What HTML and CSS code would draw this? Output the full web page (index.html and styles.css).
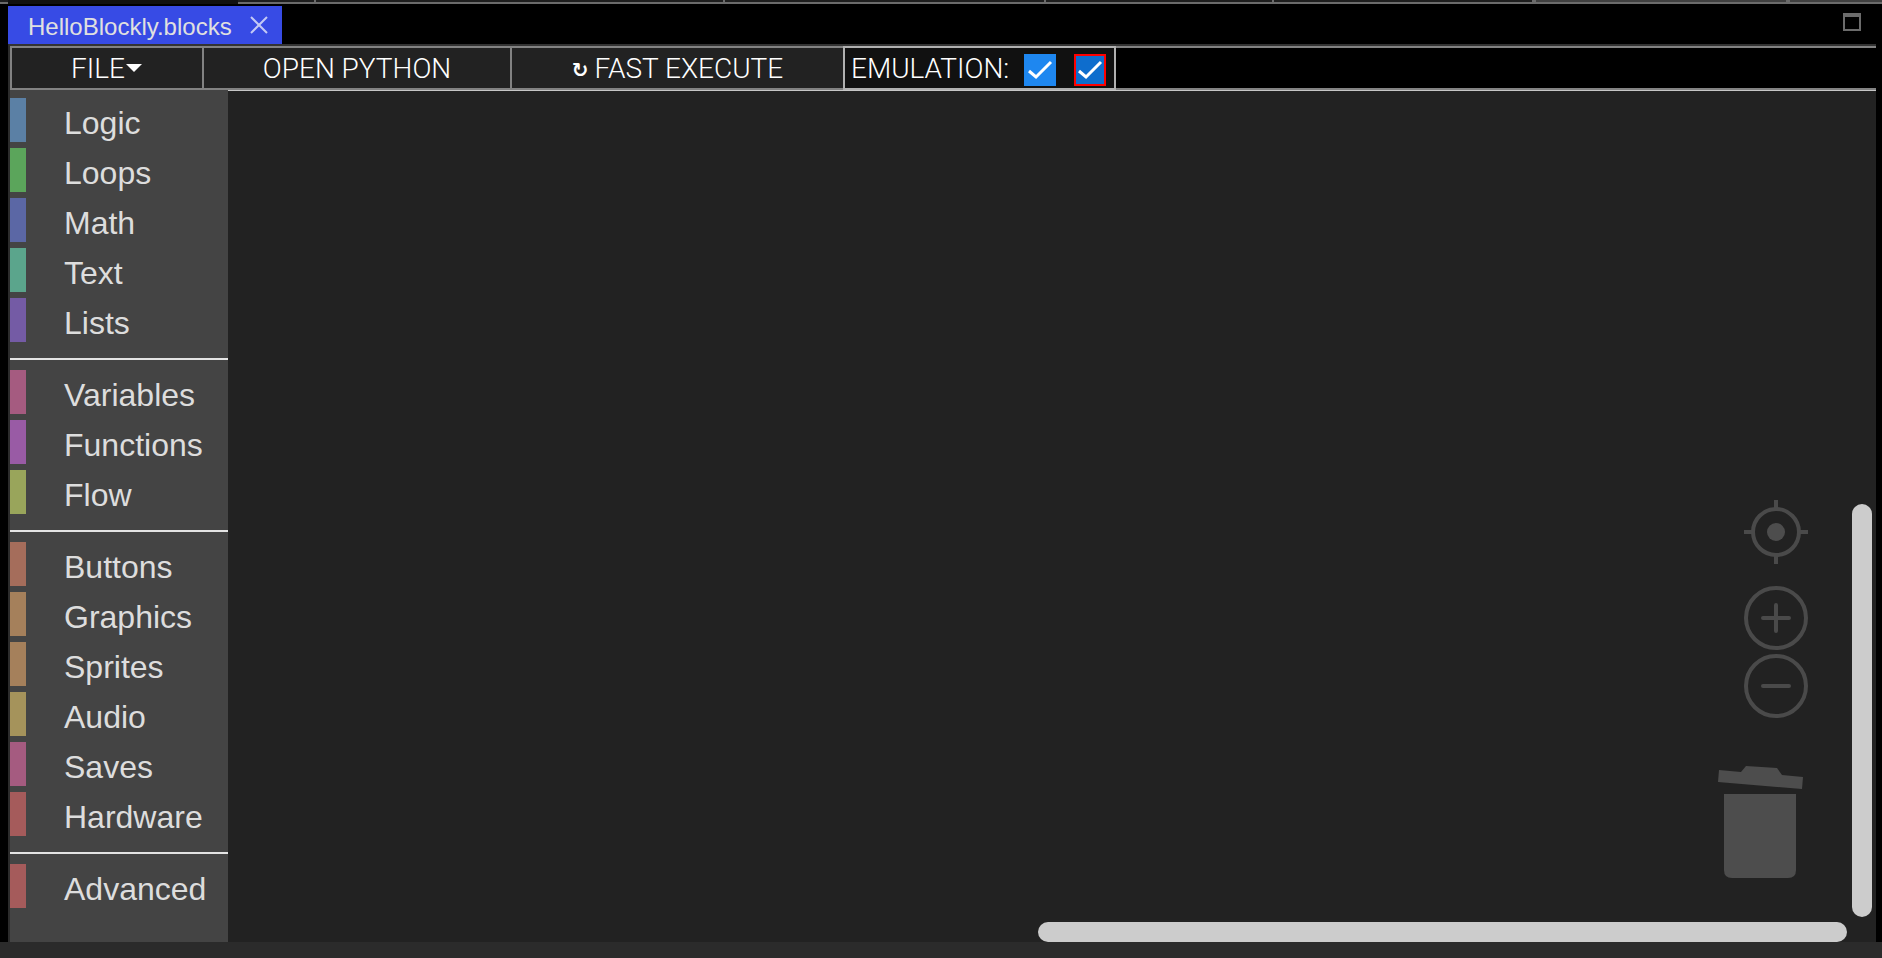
FILE: index.html
```html
<!DOCTYPE html>
<html lang="en">
<head>
    <meta charset="UTF-8">
    <meta name="viewport" content="width=device-width, initial-scale=1.0">
    <title>HelloBlockly.blocks</title>
    <link rel="stylesheet" href="styles.css">
</head>
<body>

    <div class="panel-edge">
        <span class="edge-cell edge-left"></span>
        <span class="edge-cell edge-active"></span>
        <span class="edge-cell edge-first"></span>
        <span class="edge-cell edge-second"></span>
        <span class="edge-cell edge-third"></span>
        <span class="edge-cell edge-fourth"></span>
        <span class="edge-cell edge-fifth"></span>
        <span class="edge-cell edge-light"></span>
        <span class="edge-cell edge-rest"></span>
    </div>

    <header class="tab-bar">
        <div class="tab">
            <span>HelloBlockly.blocks</span>
            <button class="tab-close" aria-label="Close">
                <svg width="18" height="18" viewBox="0 0 18 18"><path d="M1 1L17 17M17 1L1 17" stroke="#c3c9f5" stroke-width="2"/></svg>
            </button>
        </div>
        <button class="maximize" aria-label="Maximize"></button>
    </header>

    <div class="editor">
        <nav class="toolbar">
            <button class="tool tool-file">FILE<svg width="18" height="10" viewBox="0 0 18 10"><path d="M1 1H17L9 9Z" fill="#fff"/></svg></button>
            <button class="tool tool-python">OPEN PYTHON</button>
            <button class="tool tool-fast"><span class="reload">↻</span> FAST EXECUTE</button>
            <div class="emulation">
                <label for="emulation">EMULATION:</label>
                <input type="checkbox" id="emulation" class="check" checked>
                <input type="checkbox" class="check check-red" aria-label="Emulation option" checked>
            </div>
        </nav>

        <main class="content">
            <aside class="toolbox">
                <ul class="group">
                    <li class="logic"><a href="#">Logic</a></li>
                    <li class="loops"><a href="#">Loops</a></li>
                    <li class="math"><a href="#">Math</a></li>
                    <li class="text"><a href="#">Text</a></li>
                    <li class="lists"><a href="#">Lists</a></li>
                </ul>
                <ul class="group">
                    <li class="variables"><a href="#">Variables</a></li>
                    <li class="functions"><a href="#">Functions</a></li>
                    <li class="flow"><a href="#">Flow</a></li>
                </ul>
                <ul class="group">
                    <li class="buttons"><a href="#">Buttons</a></li>
                    <li class="graphics"><a href="#">Graphics</a></li>
                    <li class="graphics"><a href="#">Sprites</a></li>
                    <li class="audio"><a href="#">Audio</a></li>
                    <li class="saves"><a href="#">Saves</a></li>
                    <li class="hardware"><a href="#">Hardware</a></li>
                </ul>
                <ul class="group">
                    <li class="hardware"><a href="#">Advanced</a></li>
                </ul>
            </aside>

            <section class="workspace">
                <div class="controls">
                    <button class="control control-center" aria-label="Center">
                        <svg width="64" height="64" viewBox="0 0 64 64" fill="none" stroke="#4a4a4a" stroke-width="4">
                            <circle cx="32" cy="32" r="23"/>
                            <path d="M32 0V9M32 55V64M0 32H9M55 32H64"/>
                            <circle cx="32" cy="32" r="9" fill="#4d4d4d" stroke="none"/>
                        </svg>
                    </button>
                    <button class="control" aria-label="Zoom in">
                        <svg width="64" height="64" viewBox="0 0 64 64" fill="none" stroke="#4a4a4a" stroke-width="4">
                            <circle cx="32" cy="32" r="30"/>
                            <path d="M19 32H45M32 19V45" stroke-linecap="round"/>
                        </svg>
                    </button>
                    <button class="control" aria-label="Zoom out">
                        <svg width="64" height="64" viewBox="0 0 64 64" fill="none" stroke="#4a4a4a" stroke-width="4">
                            <circle cx="32" cy="32" r="30"/>
                            <path d="M19 32H45" stroke-linecap="round"/>
                        </svg>
                    </button>
                    <svg class="trash" width="86" height="114" viewBox="0 0 86 114" fill="#4d4d4d">
                        <path d="M1 5L23 7L28 1L59 3L64 10L85 12L84 24L0 17Z"/>
                        <path d="M6 29H78V105Q78 113 70 113H14Q6 113 6 105Z"/>
                    </svg>
                </div>
                <div class="scroll-y"><div class="thumb-y"></div></div>
                <div class="scroll-x"><div class="thumb-x"></div></div>
            </section>
        </main>
    </div>

</body>
</html>
```

FILE: styles.css
```css
* {
    box-sizing: border-box;
}
body {
    margin: 0;
    min-height: 100vh;
    display: flex;
    flex-direction: column;
    background: linear-gradient(to top, #2b2b2b 16px, #000 16px);
    color: #fff;
    font-family: "Liberation Sans", Arial, sans-serif;
}
button {
    padding: 0;
    border: none;
    background: none;
    color: inherit;
    cursor: pointer;
}
svg {
    display: block;
}
.panel-edge {
    display: flex;
    height: 4px;
}
.edge-cell {
    background-color: #1e1e1e;
    border-right: 2px solid #6b6b6b;
    border-bottom: 2px solid #6b6b6b;
}
.edge-left {
    width: 8px;
    border-right: none;
}
.edge-active {
    width: 230px;
    background-color: #111;
    border: none;
}
.edge-first {
    width: 78px;
}
.edge-second {
    width: 409px;
}
.edge-third {
    width: 321px;
}
.edge-fourth {
    width: 228px;
}
.edge-fifth {
    width: 262px;
    border-right-width: 4px;
}
.edge-light {
    width: 254px;
    background-color: #404040;
    border-right-width: 4px;
}
.edge-rest {
    flex: 1;
    background-color: #404040;
    border-right: none;
}
.tab-bar {
    display: flex;
    justify-content: space-between;
    height: 40px;
    padding: 2px 21px 0 8px;
}
.tab {
    display: flex;
    align-items: center;
    gap: 18px;
    padding: 0 14px 0 20px;
    background-color: #374be5;
    color: #e0e0e0;
    font-size: 24px;
}
.tab span {
    padding-top: 4px;
}
.maximize {
    width: 18px;
    height: 18px;
    margin-top: 7px;
    border: 2px solid #6b6b6b;
    border-top-width: 4px;
}
.editor {
    flex: 1;
    display: flex;
    flex-direction: column;
    margin: 0 6px 16px 8px;
    border-top: 2px solid #333;
    border-left: 2px solid #2b2b2b;
}
.toolbar {
    display: flex;
    height: 44px;
    border-top: 2px solid #828282;
    border-bottom: 2px solid #828282;
    font-family: Roboto, sans-serif;
    font-size: 28px;
    font-weight: 300;
}
.tool {
    display: flex;
    align-items: center;
    justify-content: center;
    border-right: 2px solid #828282;
    background-color: #222;
    font: inherit;
}
.tool-file {
    width: 194px;
    border-left: 2px solid #828282;
}
.tool-python {
    width: 308px;
}
.tool-fast {
    width: 331px;
    border-right: none;
    gap: 6px;
}
.reload {
    padding-top: 4px;
    font-family: "DejaVu Sans", sans-serif;
    font-size: 20px;
    font-weight: bold;
}
.emulation {
    display: flex;
    align-items: center;
    margin: -2px 0;
    padding: 0 8px 0 6px;
    border: 2px solid #b0b0b0;
    background-color: #111;
}
.check {
    appearance: none;
    width: 32px;
    height: 32px;
    margin: 4px 0 0 15px;
    background: #1e87f0 url("data:image/svg+xml,%3Csvg xmlns='http://www.w3.org/2000/svg' viewBox='0 0 32 32'%3E%3Cpath d='M5 17L12 23L27 8' fill='none' stroke='white' stroke-width='3'/%3E%3C/svg%3E") center / 32px 32px;
}
.check + .check {
    margin-left: 18px;
}
.check-red {
    border: 2px solid #f00;
    background-color: #0e6dcd;
}
.content {
    flex: 1;
    display: flex;
}
.toolbox {
    width: 218px;
    background-color: #444;
}
.group {
    margin: 0;
    padding: 8px 0 16px;
    list-style: none;
}
.group + .group {
    padding-top: 10px;
    border-top: 2px solid #e4e4e4;
}
.group li {
    height: 44px;
    margin-bottom: 6px;
    padding-left: 38px;
    border-left: 16px solid #5b80a5;
    line-height: 50px;
}
.group li:last-child {
    margin-bottom: 0;
}
.group a {
    color: #ddd;
    font-size: 32px;
    text-decoration: none;
}
.group .loops { border-color: #5ba55b; }
.group .math { border-color: #5b67a5; }
.group .text { border-color: #5ba58c; }
.group .lists { border-color: #745ba5; }
.group .variables { border-color: #a55b80; }
.group .functions { border-color: #995ba5; }
.group .flow { border-color: #99a55b; }
.group .buttons { border-color: #a56d5b; }
.group .graphics { border-color: #a5805b; }
.group .audio { border-color: #a5935b; }
.group .saves { border-color: #a55b80; }
.group .hardware { border-color: #a55b5b; }
.workspace {
    flex: 1;
    display: grid;
    grid-template-columns: 1fr 24px;
    grid-template-rows: 1fr 20px;
    border-top: 1px solid #c6c6c6;
    background-color: #222;
}
.controls {
    display: flex;
    flex-direction: column;
    align-items: flex-end;
    justify-content: flex-end;
    gap: 4px;
    padding: 0 44px 43px 0;
}
.control-center {
    margin-bottom: 18px;
}
.trash {
    margin: 43px 4px 0 0;
}
.scroll-y {
    display: flex;
    align-items: flex-end;
    padding-bottom: 5px;
}
.thumb-y {
    width: 20px;
    height: 413px;
    border-radius: 10px;
    background-color: #ccc;
}
.scroll-x {
    grid-column: 1 / 3;
    display: flex;
    justify-content: flex-end;
    padding-right: 29px;
}
.thumb-x {
    width: 809px;
    border-radius: 10px;
    background-color: #ccc;
}
```
